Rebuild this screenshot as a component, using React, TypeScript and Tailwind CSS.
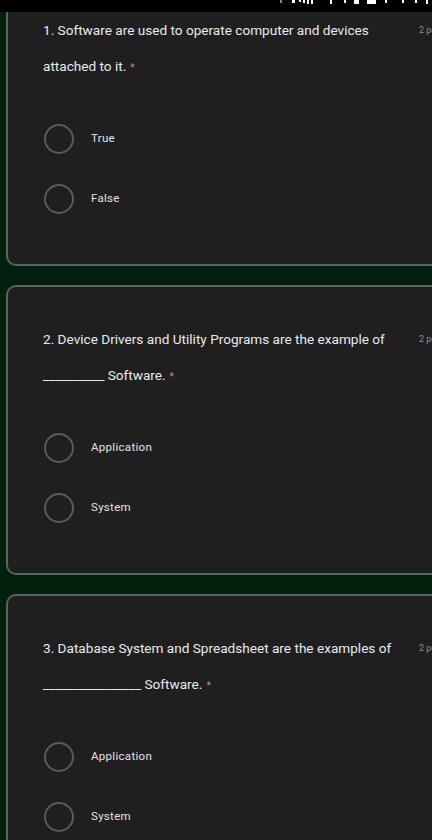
const questions = [
  {
    id: 1,
    text: "1. Software are used to operate computer and devices attached to it.",
    options: ["True", "False"],
  },
  {
    id: 2,
    text: "2. Device Drivers and Utility Programs are the example of __________ Software.",
    options: ["Application", "System"],
  },
  {
    id: 3,
    text: "3. Database System and Spreadsheet are the examples of ________________ Software.",
    options: ["Application", "System"],
  },
];

function StatusBar() {
  // only the bottom edge of the phone status icons is visible
  const marks = [
    [280, 2, 3, "#8a8a8a"],
    [292, 3, 3, "#ffffff"],
    [299, 2, 2, "#ffffff"],
    [303, 2, 3, "#ffffff"],
    [307, 2, 4, "#ffffff"],
    [311, 2, 4, "#ffffff"],
    [330, 2, 4, "#ffffff"],
    [344, 2, 3, "#ffffff"],
    [354, 5, 4, "#ffffff"],
    [367, 9, 4, "#ffffff"],
    [385, 2, 3, "#ffffff"],
    [402, 2, 3, "#ffffff"],
    [415, 2, 3, "#ffffff"],
    [426, 2, 4, "#ffffff"],
  ] as const;
  return (
    <div className="h-[12px] w-full bg-black">
      <svg width="432" height="12" viewBox="0 0 432 12">
        {marks.map(([x, w, h, c]) => (
          <rect key={x} x={x} y={0} width={w} height={h} fill={c} />
        ))}
      </svg>
    </div>
  );
}

function Radio({ label }: { label: string }) {
  return (
    <div className="flex h-[48px] items-center pl-[1px]">
      <span className="h-[30px] w-[30px] shrink-0 rounded-full border-2 border-[#5a5b5d]" />
      <span className="ml-[17px] text-[11.5px] tracking-[0.3px] text-[#e3e3e3]">{label}</span>
    </div>
  );
}

function QuestionCard({
  text,
  options,
  first,
}: {
  text: string;
  options: string[];
  first?: boolean;
}) {
  return (
    <div
      className={
        first
          ? "ml-[6px] w-[460px] rounded-b-[10px] border-2 border-t-0 border-[#56665a] bg-[#1f1f1f] pb-[41px] pl-[35px]"
          : "ml-[6px] w-[460px] rounded-[10px] border-2 border-[#56665a] bg-[#1f1f1f] pb-[41px] pl-[35px] pt-[34px]"
      }
    >
      <div className="flex items-start">
        <p className="h-[72px] w-[366px] text-[13.6px] leading-[36px] text-[#e8eaed]">
          {text}
          <span className="ml-[4px] text-[10px] leading-none text-[#d9807a]">*</span>
        </p>
        <span className="ml-[10px] whitespace-nowrap text-[9px] leading-[36px] text-[#8f8f8f]">
          2 points
        </span>
      </div>
      <div className="mt-[31px] flex flex-col gap-[12px]">
        {options.map((o) => (
          <Radio key={o} label={o} />
        ))}
      </div>
    </div>
  );
}

export default function App() {
  return (
    <div
      className="h-[840px] w-[432px] overflow-hidden bg-[#03200f]"
      style={{ fontFamily: "Roboto, 'Liberation Sans', sans-serif" }}
    >
      <StatusBar />
      <div className="flex flex-col gap-[19px]">
        {questions.map((q, i) => (
          <QuestionCard key={q.id} text={q.text} options={q.options} first={i === 0} />
        ))}
      </div>
    </div>
  );
}
